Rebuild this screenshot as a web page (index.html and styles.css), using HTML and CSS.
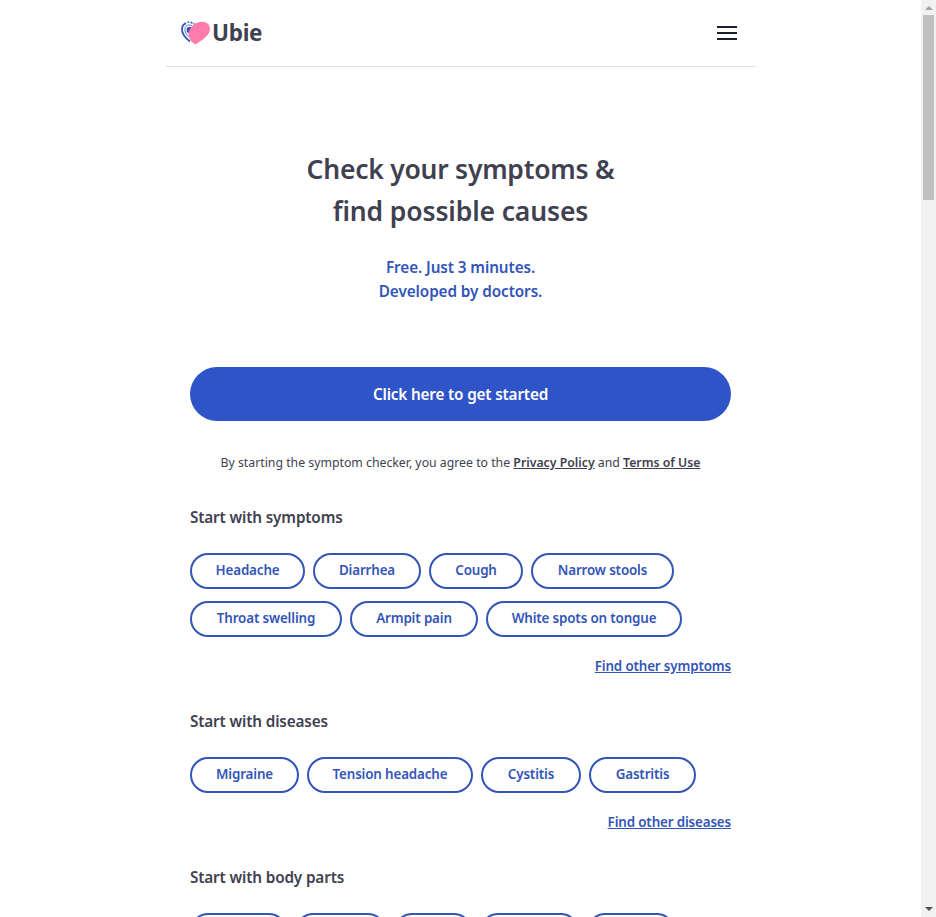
FILE: index.html
```html
<!DOCTYPE html>
<html lang="en">
<head>
<meta charset="utf-8">
<title>Ubie</title>
<link rel="stylesheet" href="styles.css">
</head>
<body>
<div class="page">
  <header class="header">
    <a class="logo">
      <svg class="logo-mark" width="30" height="24" viewBox="0 0 30 24" aria-hidden="true">
        <path d="M9 20.500C4.500 17 1 13 1 8.500C1 5.500 2.700 3.200 5 2.200" fill="none" stroke="#3355b8" stroke-width="1.800"/>
        <path d="M6.500 1.300L8 1M9.500 1.200L11.500 2M12.500 2.500L14 3.500" fill="none" stroke="#3355b8" stroke-width="1.500"/>
        <path d="M10 17.500C6 14.500 3.800 11.500 3.800 8.500C3.800 5.800 5.600 4 8 4C9.500 4 10.800 4.500 12 5.500" fill="none" stroke="#3355b8" stroke-width=".8"/>
        <circle cx="8.800" cy="9" r="3.300" fill="#3355b8"/>
        <path d="M13.500 23C10 20.500 7.600 17.500 7.600 13.500C7.600 7 14.500 .8 21 .8C26 .8 29 3.700 29 8C29 14.500 20 20 15 23Q14.200 23.500 13.500 23Z" fill="#ff7bac"/>
      </svg>
      <span class="logo-text">Ubie</span>
    </a>
    <span class="menu"><i></i><i></i><i></i></span>
  </header>
  <main class="main">
    <h1><span>Check your symptoms &amp;</span><br><span class="line2">find possible causes</span></h1>
    <p class="lead"><span>Free. Just 3 minutes.</span><br><span>Developed by doctors.</span></p>
    <a class="cta"><span>Click here to get started</span></a>
    <p class="terms"><span>By starting the symptom checker, you agree to the <a>Privacy Policy</a> and <a>Terms of Use</a></span></p>
    <section class="symptoms">
      <h2><span>Start with symptoms</span></h2>
      <div class="chips">
        <a><span>Headache</span></a><a><span>Diarrhea</span></a><a><span>Cough</span></a><a><span>Narrow stools</span></a><a><span>Throat swelling</span></a><a><span>Armpit pain</span></a><a><span>White spots on tongue</span></a>
      </div>
      <p class="more"><a>Find other symptoms</a></p>
    </section>
    <section class="diseases">
      <h2><span>Start with diseases</span></h2>
      <div class="chips">
        <a><span>Migraine</span></a><a><span>Tension headache</span></a><a><span>Cystitis</span></a><a><span>Gastritis</span></a>
      </div>
      <p class="more"><a>Find other diseases</a></p>
    </section>
    <section class="parts">
      <h2><span>Start with body parts</span></h2>
      <div class="chips"><a></a><a></a><a></a><a></a><a></a></div>
    </section>
  </main>
</div>
<div class="scrollbar"><i class="up"></i><i class="thumb"></i><i class="down"></i></div>
</body>
</html>
```

FILE: styles.css
```css
* { box-sizing: border-box; }
body {
  margin: 0;
  height: 917px;
  overflow: hidden;
  display: flex;
  background: #fff;
  color: #3f4150;
  font-family: "Noto Sans", sans-serif;
}
h1, h2, p { margin: 0; }
.page { flex: 1; height: 917px; overflow: hidden; }
.header {
  width: 589px;
  height: 67px;
  margin: 0 auto;
  padding: 0 18px 0 15px;
  border-bottom: 1px solid #dfdfdf;
  display: flex;
  align-items: center;
  justify-content: space-between;
}
.logo { display: flex; align-items: center; gap: 1px; }
.logo-text { font-size: 22.5px; line-height: 30px; font-weight: 700; letter-spacing: -0.3px; }
.menu { display: flex; flex-direction: column; gap: 4px; }
.menu i { width: 20px; height: 2px; background: #1b1e2c; }
.main { width: 541px; margin: 0 auto; padding-top: 81px; }
h1 { font-size: 26.5px; line-height: 42px; font-weight: 600; text-align: center; letter-spacing: -0.25px; }
h1 .line2 { letter-spacing: -0.13px; }
.lead { margin-top: 23px; font-size: 15.3px; line-height: 24px; font-weight: 600; text-align: center; color: #3355b8; letter-spacing: -0.09px; }
.cta {
  margin-top: 64px;
  height: 54px;
  border-radius: 27px;
  display: flex;
  align-items: center;
  justify-content: center;
  background: #2f54c8;
  color: #fff;
  font-size: 15.3px;
  font-weight: 600;
  letter-spacing: -0.17px;
}
.terms { margin-top: 32px; font-size: 12.3px; line-height: 20px; text-align: center; white-space: nowrap; letter-spacing: -0.01px; }
.terms a { font-weight: 600; text-decoration: underline; }
section { padding-top: 31px; }
section + section { padding-top: 29px; }
.symptoms { height: 206px; }
.diseases { height: 156px; }
h2 { font-size: 15.3px; line-height: 26px; font-weight: 600; letter-spacing: -0.15px; }
.chips { margin-top: 23px; display: flex; flex-wrap: wrap; gap: 12px 8px; }
.chips a {
  height: 36px;
  padding-bottom: 2px;
  border: 2px solid #3355b8;
  border-radius: 18px;
  display: flex;
  align-items: center;
  justify-content: center;
  color: #3355b8;
  font-size: 13.4px;
  line-height: 20px;
  font-weight: 600;
  letter-spacing: -0.15px;
  white-space: nowrap;
}
.symptoms a:nth-child(1) { width: 115px; }
.symptoms a:nth-child(2) { width: 108px; }
.symptoms a:nth-child(3) { width: 94px; }
.symptoms a:nth-child(4) { width: 143px; }
.symptoms a:nth-child(5) { width: 152px; }
.symptoms a:nth-child(6) { width: 128px; }
.symptoms a:nth-child(7) { width: 196px; }
.diseases a:nth-child(1) { width: 109px; }
.diseases a:nth-child(2) { width: 166px; }
.diseases a:nth-child(3) { width: 100px; }
.diseases a:nth-child(4) { width: 107px; }
.parts a:nth-child(1) { width: 97px; }
.parts a:nth-child(2) { width: 91px; }
.parts a:nth-child(3) { width: 78px; }
.parts a:nth-child(4) { width: 99px; }
.parts a:nth-child(5) { width: 88px; }
.more { margin-top: 18px; text-align: right; font-size: 13.4px; line-height: 22px; font-weight: 600; color: #3355b8; text-decoration: underline; letter-spacing: -0.15px; }
.more a { display: inline; }
.scrollbar { width: 15px; height: 917px; background: #f1f1f1; display: flex; flex-direction: column; align-items: center; }
.up { margin-top: 6px; border: 4px solid transparent; border-top: 0; border-bottom: 4px solid #a3a3a3; }
.thumb { margin-top: 5px; width: 11px; height: 185px; background: #c1c1c1; }
.down { margin-top: auto; margin-bottom: 6px; border: 4px solid transparent; border-bottom: 0; border-top: 4px solid #505050; }
```
